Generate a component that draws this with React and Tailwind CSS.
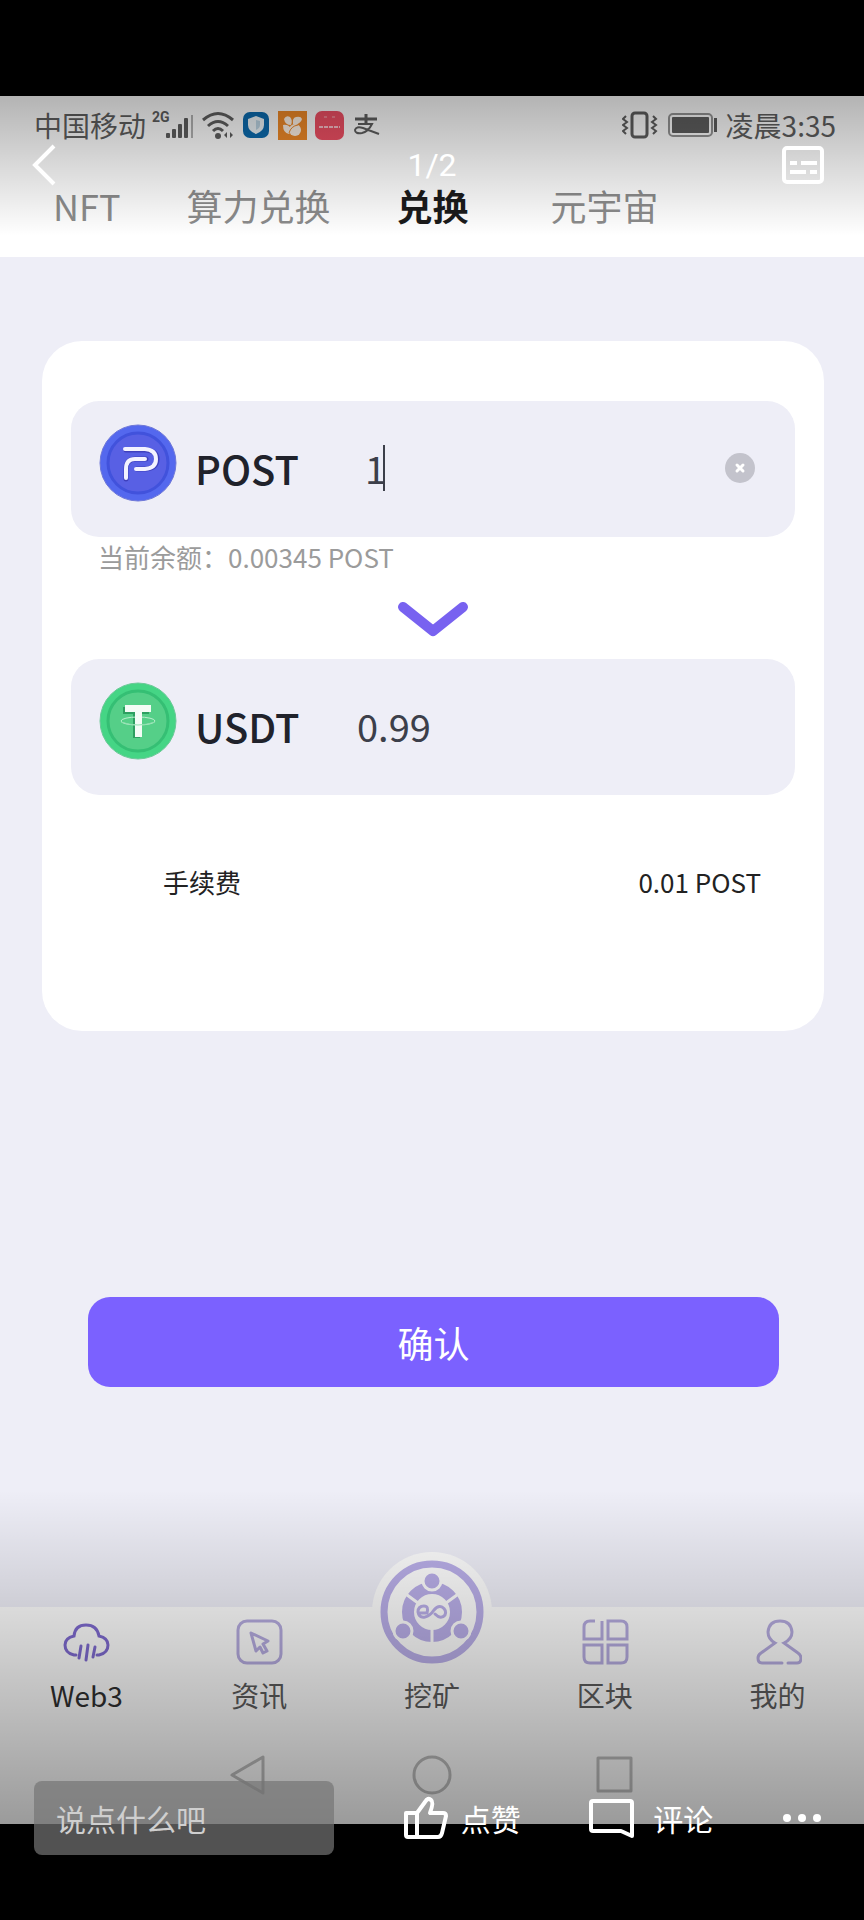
import React, { useState } from 'react';

const StatusBar = () => (
  <div className="h-[60px] pl-[34px] pr-7 pb-0.5 flex items-center justify-between text-[28px] leading-10 text-[#5f5f5f]">
    <div className="flex items-center gap-2">
      <div className="flex items-start">
        <span>中国移动</span>
        <span className="ml-1.5 font-['Roboto'] text-sm leading-6 font-bold">2G</span>
        <svg width="28" height="24" viewBox="0 0 28 24" className="mt-2.5 -ml-1 fill-[#5f5f5f]">
          <rect x="0" y="18" width="4" height="5" rx="1" />
          <rect x="6" y="14" width="4" height="9" rx="1" />
          <rect x="12" y="9" width="4" height="14" rx="1" />
          <rect x="18" y="3" width="4" height="20" rx="1" />
          <rect x="25" y="0" width="2" height="23" fill="#b3b3b3" />
        </svg>
      </div>
      <svg width="32" height="28" viewBox="0 0 32 28" className="fill-none stroke-[#5f5f5f] stroke-3">
        <path d="M1 9Q16 -4 31 9" />
        <path d="M6 15Q16 6 26 15" />
        <path d="M11 20Q16 15 21 20" />
        <circle cx="16" cy="25" r="3" className="fill-[#5f5f5f] stroke-none" />
        <path d="M22 24L25 21V27ZM28 21V27L31 24Z" className="fill-[#5f5f5f] stroke-none" />
      </svg>
      <svg width="28" height="28" viewBox="0 0 28 28">
        <rect x="1" y="1" width="26" height="26" rx="7" fill="#0c6cb0" />
        <path d="M14 5L22 8V14Q22 20 14 23Q6 20 6 14V8Z" fill="#eef6fa" />
        <path d="M14 9L18 10V14Q18 17 14 19Z" fill="#bcd5e4" />
      </svg>
      <svg width="29" height="29" viewBox="0 0 29 29">
        <rect width="29" height="29" fill="#f08a28" />
        <path d="M6 8Q8 4 12 6Q15 9 13 14Q7 14 6 8Z" fill="#fff3e6" />
        <path d="M15 13Q14 7 18 6Q23 5 24 8Q23 12 17 14Z" fill="#fff3e6" />
        <path d="M5 14Q11 13 14 19L11 23Q5 22 5 14Z" fill="#fff3e6" />
        <circle cx="17" cy="19" r="6" fill="#fff3e6" />
        <path d="M11 22Q13 15 20 14" fill="none" stroke="#f08a28" strokeWidth="1" />
      </svg>
      <svg width="29" height="29" viewBox="0 0 29 29">
        <rect width="29" height="29" rx="7" fill="#f05064" />
        <path d="M4 16H25" stroke="#fbc0c8" strokeWidth="2" strokeDasharray="4 1" />
        <path d="M9 6H12M17 6H20" stroke="#f5808e" strokeWidth="2" />
      </svg>
      <svg width="28" height="28" viewBox="0 0 28 28" className="fill-none stroke-[#5f5f5f] stroke-[3px]">
        <path d="M3 8H25M14 3V13" />
        <path d="M6 13H20Q16 21 10 22Q3 23 3 19Q4 15 11 17L27 23" className="stroke-2" />
      </svg>
    </div>
    <div className="flex items-center gap-2">
      <svg width="38" height="28" viewBox="0 0 38 28" className="fill-none stroke-[#5f5f5f]">
        <rect x="10" y="2" width="15" height="24" rx="3" strokeWidth="3" />
        <path d="M4 5L1 8L5 11L1 14L5 17L1 20L4 23M31 5L34 8L30 11L34 14L30 17L34 20L31 23" strokeWidth="2" />
      </svg>
      <svg width="50" height="24" viewBox="0 0 50 24">
        <rect x="1" y="1" width="43" height="22" rx="4" fill="none" stroke="#959595" strokeWidth="2" />
        <rect x="4" y="4" width="37" height="16" rx="1" fill="#5f5f5f" />
        <rect x="46" y="5" width="3" height="14" fill="#5f5f5f" />
      </svg>
      <span>凌晨3:35</span>
    </div>
  </div>
);

const PostCoin = () => (
  <svg width="78" height="78" viewBox="0 0 78 78" fill="none">
    <circle cx="39" cy="39" r="38" fill="#5468ee" stroke="#6f78d8" />
    <circle cx="39" cy="39" r="30" fill="#5860e4" stroke="#4152dc" strokeWidth="3" />
    <path d="M27 26H47Q58 27 58 35Q58 44 47 45H38M27 55V45Q27 35 37 35H47" stroke="#3f40bd" strokeWidth="5" strokeLinecap="round" />
    <path d="M26 25H46Q57 26 57 35Q57 44 46 45H37M27 54V45Q27 35 36 35H46" stroke="#f3f2ff" strokeWidth="4" strokeLinecap="round" />
  </svg>
);

const UsdtCoin = () => (
  <svg width="78" height="78" viewBox="0 0 78 78" fill="none">
    <circle cx="39" cy="39" r="38" fill="#45d585" stroke="#6cc998" />
    <circle cx="39" cy="39" r="30" fill="#55cf88" stroke="#35bf74" strokeWidth="3" />
    <path d="M24 25H50V32H41V56H34V32H24Z" fill="#2d9f60" />
    <ellipse cx="39" cy="39" rx="17" ry="4" stroke="#bcefcf" />
    <path d="M26 23H52V30H43V55H36V30H26Z" fill="#f3fcf5" />
    <path d="M22 40Q39 46 56 40" stroke="#8ee0ae" />
  </svg>
);

const Web3Icon = () => (
  <svg width="48" height="46" viewBox="0 0 48 46" className="fill-none stroke-[#7f6bd0] stroke-[3px]" strokeLinecap="round">
    <path d="M14 36H12Q3 34 3 26Q3 19 12 17Q13 6 24 6T37 17Q46 19 46 26Q46 34 37 36H35" />
    <path d="M19 27L17 39M26 26L24 41M33 28L31 38" />
  </svg>
);

const NewsIcon = () => (
  <svg width="48" height="46" viewBox="0 0 48 46" className="fill-none stroke-[#b5abdf] stroke-3" strokeLinejoin="round">
    <rect x="3" y="2" width="43" height="42" rx="9" />
    <path d="M16 14L33 22L28 25L32 32L28 34L25 28L21 32Z" />
  </svg>
);

const BlocksIcon = () => (
  <svg width="48" height="46" viewBox="0 0 48 46" className="fill-none stroke-[#b5abdf] stroke-3">
    <path d="M14 2H9Q3 2 3 8V20H21V2" />
    <path d="M27 2H40Q46 2 46 8V20H27Z" />
    <path d="M3 26H21V44H9Q3 44 3 38Z" />
    <path d="M27 26H46V38Q46 44 40 44H27Z" />
  </svg>
);

const MineIcon = () => (
  <svg width="48" height="46" viewBox="0 0 48 46" className="fill-none stroke-[#b5abdf] stroke-3" strokeLinecap="round">
    <path d="M28 44H8Q4 44 4 39Q4 36 7 34L21 24Q14 20 14 13Q15 2 26 2T38 13Q38 20 30 24L44 34Q47 36 47 39Q47 44 43 44H34" />
  </svg>
);

const MiningIcon = () => (
  <svg width="120" height="120" viewBox="0 0 120 120" fill="none">
    <circle cx="60" cy="60" r="60" fill="#fdfdfd" />
    <circle cx="60" cy="60" r="48" stroke="#b9aee8" strokeWidth="7" />
    <circle cx="60" cy="60" r="24" stroke="#b9aee8" strokeWidth="12" />
    <path d="M60 76V92M46 51L31 40M74 51L89 40" stroke="#fdfdfd" strokeWidth="3" />
    {[[60, 29], [31, 79], [89, 79]].map(([cx, cy]) => (
      <circle key={cx} cx={cx} cy={cy} r="9" fill="#b9aee8" stroke="#fdfdfd" strokeWidth="3" />
    ))}
    <path d="M48 61H55Q57 54 52 54Q46 54 46 60Q47 66 53 65Q58 64 62 58Q66 53 70 55Q75 58 73 63Q69 68 63 62" stroke="#b9aee8" strokeWidth="3" strokeLinecap="round" />
  </svg>
);

const tabs = ['NFT', '算力兑换', '兑换'];

const navItems = [
  { label: 'Web3', icon: Web3Icon, active: true },
  { label: '资讯', icon: NewsIcon },
  { label: '挖矿', icon: MiningIcon, center: true },
  { label: '区块', icon: BlocksIcon },
  { label: '我的', icon: MineIcon },
];

const Header = () => (
  <header className="bg-white">
    <StatusBar />
    <nav className="h-[101px] pl-[53px] pb-1 flex items-center gap-[66px] text-4xl text-[#8c8c8c]">
      {tabs.map((tab) => (
        <a key={tab} href="#" className={tab === '兑换' ? 'font-bold text-[#1b1b1b]' : ''}>{tab}</a>
      ))}
      <a href="#" className="ml-4">元宇宙</a>
    </nav>
  </header>
);

const SwapCard = () => {
  const [amount, setAmount] = useState('1');

  return (
    <section className="mt-[84px] ml-[42px] mr-10 px-[29px] pt-[60px] pb-[128px] bg-white rounded-[40px]">
      <div className="h-[136px] pl-7 pr-10 pb-0.5 flex items-center rounded-[28px] bg-[#eeeef7]">
        <div className="-mt-2.5"><PostCoin /></div>
        <label htmlFor="amount" className="w-[162px] ml-[18px] text-[40px] leading-[52px] font-medium text-[#20222b]">POST</label>
        <div className="relative flex-1 flex items-center">
          <input
            id="amount"
            value={amount}
            onChange={(e) => setAmount(e.target.value)}
            className="w-full pl-2 bg-transparent text-[38px] leading-[52px] text-[#3c3f4a] outline-none"
          />
          <span className="absolute left-[26px] h-[46px] w-0.5 bg-[#3c3f4a]" />
        </div>
        <button aria-label="清除" onClick={() => setAmount('')}>
          <svg width="30" height="30" viewBox="0 0 30 30">
            <circle cx="15" cy="15" r="15" fill="#c3c3cc" />
            <path d="M12 12L18 18M18 12L12 18" stroke="#fff" strokeWidth="3" strokeLinecap="round" />
          </svg>
        </button>
      </div>
      <p className="pl-[27px] text-[26px] leading-10 text-[#9b9b9b]">当前余额：0.00345 POST</p>
      <svg width="72" height="38" viewBox="0 0 72 38" className="block mx-auto mt-6 mb-5">
        <path d="M6 6L36 30L66 6" fill="none" stroke="#7862f0" strokeWidth="10" strokeLinecap="round" strokeLinejoin="round" />
      </svg>
      <div className="h-[136px] pl-7 pr-10 pb-0.5 flex items-center rounded-[28px] bg-[#eeeef7]">
        <div className="-mt-2.5"><UsdtCoin /></div>
        <span className="w-[162px] ml-[18px] text-[40px] leading-[52px] font-medium text-[#20222b]">USDT</span>
        <output className="text-[38px] leading-[52px] text-[#3c3f4a]">0.99</output>
      </div>
      <div className="mt-16 h-11 pl-[92px] pr-[34px] flex items-center justify-between text-[26px] text-[#222]">
        <span>手续费</span>
        <span>0.01 POST</span>
      </div>
    </section>
  );
};

const BottomNav = () => (
  <footer className="bg-[#fdfdfd]">
    <nav className="h-[119px] grid grid-cols-5 items-start">
      {navItems.map(({ label, icon: Icon, active, center }) => (
        <a key={label} href="#" className={`flex flex-col items-center ${center ? '-mt-[55px]' : 'pt-3'}`}>
          <Icon />
          <span className={`text-[28px] leading-10 ${center ? 'mt-[3px]' : 'mt-2.5'} ${active ? 'text-[#303030]' : 'text-[#5c5c5c]'}`}>
            {label}
          </span>
        </a>
      ))}
    </nav>
    <div className="h-[98px] flex items-center justify-center gap-36">
      <button aria-label="返回">
        <svg width="40" height="40" viewBox="0 0 40 40" className="fill-none stroke-[#bdbdbd] stroke-3" strokeLinejoin="round">
          <path d="M4 20L35 2V38Z" />
        </svg>
      </button>
      <button aria-label="主屏幕">
        <svg width="40" height="40" viewBox="0 0 40 40" className="fill-none stroke-[#bdbdbd] stroke-3">
          <circle cx="20" cy="20" r="18" />
        </svg>
      </button>
      <button aria-label="最近任务">
        <svg width="40" height="40" viewBox="0 0 40 40" className="fill-none stroke-[#bdbdbd] stroke-3" strokeLinejoin="round">
          <rect x="2" y="3" width="33" height="33" />
        </svg>
      </button>
    </div>
  </footer>
);

const ViewerTop = () => (
  <div className="absolute inset-x-0 top-0 h-[236px] pt-[135px] pl-8 pr-10 bg-linear-to-b from-black/50 to-transparent text-white">
    <div className="h-[60px] grid grid-cols-3 items-center">
      <button aria-label="关闭" className="justify-self-start">
        <svg width="24" height="42" viewBox="0 0 24 42" className="fill-none stroke-white stroke-4">
          <path d="M22 2L3 21L22 40" />
        </svg>
      </button>
      <span className="justify-self-center pl-2 font-['Roboto'] text-[32px] leading-8">1/2</span>
      <button aria-label="查看文字" className="justify-self-end">
        <svg width="42" height="38" viewBox="0 0 42 38" className="fill-none stroke-white stroke-4">
          <rect x="2" y="2" width="38" height="34" rx="3" />
          <path d="M8 17H15M19 17H35M8 26H24M28 26H35" />
        </svg>
      </button>
    </div>
  </div>
);

const ViewerBottom = () => (
  <div className="absolute inset-x-0 bottom-0 h-[430px] pb-[65px] pl-[34px] pr-[42px] flex items-end bg-linear-to-b from-transparent to-black/50 text-3xl text-white">
    <div className="h-[74px] w-full flex items-center justify-between">
      <input
        aria-label="评论内容"
        placeholder="说点什么吧"
        className="h-full w-[300px] px-[22px] rounded-lg bg-[#757575]/70 placeholder:text-[#cfcfcf] outline-none"
      />
      <button className="flex items-center gap-3">
        <svg width="46" height="44" viewBox="0 0 46 44" className="fill-none stroke-white stroke-4" strokeLinejoin="round">
          <path d="M3 17H14V41H5Q3 41 3 39ZM14 17L22 6Q25 1 28 4Q31 6 27 17H40Q43 17 43 20L39 37Q38 41 35 41H14" />
        </svg>
        点赞
      </button>
      <button className="flex items-center gap-[18px]">
        <svg width="46" height="40" viewBox="0 0 46 40" className="fill-none stroke-white stroke-4" strokeLinejoin="round">
          <path d="M4 3H41Q43 3 43 5V38L32 33H4Q2 33 2 31V5Q2 3 4 3Z" />
        </svg>
        评论
      </button>
      <button aria-label="更多">
        <svg width="40" height="10" viewBox="0 0 40 10" className="fill-white">
          <circle cx="5" cy="5" r="4" />
          <circle cx="20" cy="5" r="4" />
          <circle cx="35" cy="5" r="4" />
        </svg>
      </button>
    </div>
  </div>
);

export default function App() {
  return (
    <div className="relative min-h-screen py-24 flex flex-col bg-black font-['Noto_Sans_CJK_SC',sans-serif]">
      <div className="flex-1 flex flex-col bg-[#eeeef7]">
        <Header />
        <main className="flex-1 flex flex-col">
          <SwapCard />
          <button className="mt-[266px] ml-[88px] mr-[85px] h-[90px] rounded-[22px] bg-[#7b61ff] text-4xl text-white">确认</button>
        </main>
        <BottomNav />
      </div>
      <ViewerTop />
      <ViewerBottom />
    </div>
  );
}
